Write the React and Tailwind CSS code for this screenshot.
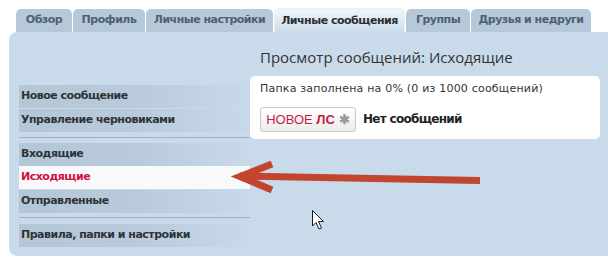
import React from 'react'

const tabs = [
  { label: 'Обзор', w: 'w-[56px]' },
  { label: 'Профиль', w: 'w-[72px]' },
  { label: 'Личные настройки', w: 'w-[127px]' },
  { label: 'Личные сообщения', w: 'w-[131px]', active: true },
  { label: 'Группы', w: 'w-[64px]' },
  { label: 'Друзья и недруги', w: 'w-[120px]' },
]

function NavRow({ children, active }) {
  return (
    <div
      className={`h-[23px] pl-[2px] flex items-center text-[11px] tracking-[-0.5px] font-bold ${
        active
          ? 'bg-[#f7f9fb] text-[#d4103f]'
          : 'bg-gradient-to-r from-[#b4c7d7] via-[#b8cadb] to-[#c8daea] text-[#2f3336]'
      }`}
    >
      {children}
    </div>
  )
}

function Overlay() {
  return (
    <svg className="absolute inset-0 pointer-events-none" width="608" height="264">
      <g stroke="#c2452d" strokeWidth="7" fill="none">
        <line x1="480" y1="180.5" x2="240" y2="176" />
        <polyline points="272,164 240,176.5 272,190" strokeLinejoin="miter" />
      </g>
      <path
        d="M312.5 210.5 L312.5 226 L316 222.5 L319 229 L321.5 228 L318.5 221.5 L323.5 221.5 Z"
        fill="#fff"
        stroke="#1a1a1a"
        strokeWidth="1"
      />
    </svg>
  )
}

export default function App() {
  return (
    <div className="relative w-[608px] h-[264px] bg-white overflow-hidden font-['DejaVu_Sans',sans-serif]">
      {/* Tabs */}
      <div className="flex items-end gap-px pl-[16px] pt-[8px] h-[32px]">
        {tabs.map((t) =>
          t.active ? (
            <div
              key={t.label}
              className={`${t.w} h-[25px] -mb-px rounded-t-[5px] border border-b-0 border-[#e8f0f7] bg-gradient-to-b from-[#f1f6fa] to-[#c9dbeb] flex items-center justify-center text-[11px] tracking-[-0.5px] font-bold text-[#2c2f33]`}
            >
              {t.label}
            </div>
          ) : (
            <div
              key={t.label}
              className={`${t.w} h-[23px] rounded-t-[5px] bg-[#b7c9d9] flex items-center justify-center text-[11px] tracking-[-0.5px] font-bold text-[#4d6176]`}
            >
              {t.label}
            </div>
          )
        )}
      </div>

      {/* Panel */}
      <div className="ml-[9px] h-[224px] rounded-l-[8px] bg-[#c9dbeb] flex">
        <div className="w-[241px] pl-[10px] pt-[53px]">
          <NavRow>Новое сообщение</NavRow>
          <div className="mt-px">
            <NavRow>Управление черновиками</NavRow>
          </div>
          <div className="mt-[5px] mb-[5px] h-px bg-[#9fb2c3]" />
          <NavRow>Входящие</NavRow>
          <NavRow active>Исходящие</NavRow>
          <div className="mt-px">
            <NavRow>Отправленные</NavRow>
          </div>
          <div className="mt-[4px] mb-[6px] h-px bg-[#9fb2c3]" />
          <NavRow>Правила, папки и настройки</NavRow>
        </div>

        <div className="flex-1 pr-[8px]">
          <div className="pl-[10px] pt-[15px] h-[44px] text-[15px] text-[#333] font-['Open_Sans',sans-serif] leading-[20px]">
            Просмотр сообщений: Исходящие
          </div>
          <div className="h-[63px] bg-white rounded-[5px] pl-[10px] pt-[6px]">
            <div className="text-[11px] tracking-[0.2px] leading-[14px] text-[#333]">
              Папка заполнена на 0% (0 из 1000 сообщений)
            </div>
            <div className="mt-[11px] flex items-start gap-[7px]">
              <div className="w-[96px] h-[25px] rounded-[3px] border border-[#c8c8c8] bg-gradient-to-b from-white to-[#ececec] flex items-center justify-center gap-[4px] font-['Liberation_Sans',sans-serif] text-[13px] text-[#c81c48]">
                <span>
                  НОВОЕ <span className="font-bold">ЛС</span>
                </span>
                <span className="text-[#9a9a9a] text-[13px] leading-none font-bold">✱</span>
              </div>
              <div className="pt-[3px] text-[12px] tracking-[-0.7px] font-bold text-[#222]">Нет сообщений</div>
            </div>
          </div>
        </div>
      </div>

      <Overlay />
    </div>
  )
}
